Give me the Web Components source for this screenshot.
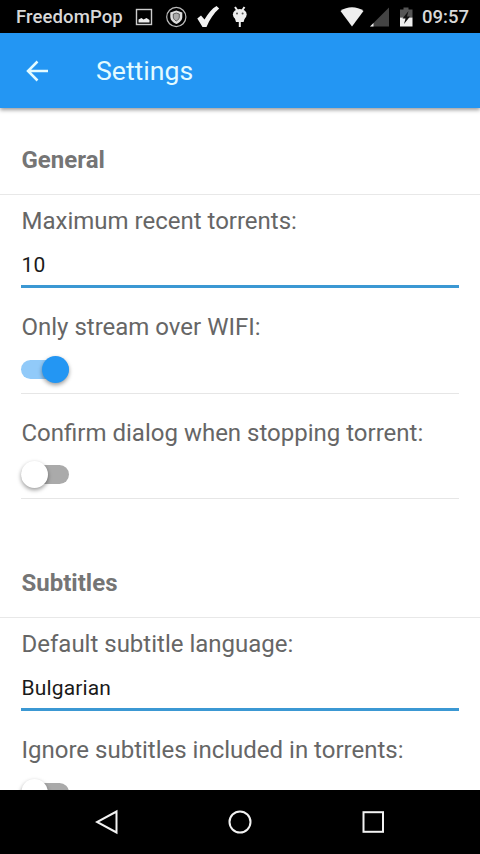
<!DOCTYPE html>
<html lang="en">
<head>
<meta charset="utf-8">
<title>Settings</title>
<style>
html,body{margin:0;height:100%;overflow:hidden;background:#fff;font-family:Roboto,"Noto Sans",sans-serif}
</style>
</head>
<body>
<settings-screen></settings-screen>
<script>
const define = (name, html) => {
  const t = document.createElement('template');
  t.innerHTML = html;
  customElements.define(name, class extends HTMLElement {
    constructor() {
      super();
      this.attachShadow({mode: 'open'}).appendChild(t.content.cloneNode(true));
    }
  });
};

define('status-bar', `
<style>
:host{display:flex;align-items:center;height:33px;box-sizing:border-box;background:#000;color:#d8d8d8;font-size:18.5px;font-weight:500;line-height:33px;padding:0 11px 0 16px;flex:none}
svg{display:block;flex:none}
.name{width:108px;white-space:nowrap;margin-right:11px;padding-top:2px;letter-spacing:.1px}
.grow{flex:1}
.time{padding-top:2px;font-size:18.500px;width:47px;white-space:nowrap}
</style>
<span class="name">FreedomPop</span>
<svg width="120" height="33" viewBox="135 0 120 33">
  <rect x="136.5" y="9.5" width="15" height="15" fill="none" stroke="#ccc" stroke-width="1.4"/>
  <path d="M138.5 22.5v-3l3-1.5 2 1.5 3-1.5 3 2v2.500z" fill="#eee"/>
  <circle cx="176.300" cy="17" r="9.600" fill="none" stroke="#bbb" stroke-width="1.200"/>
  <path d="M176.300 10.500l6 2v4.500c0 3-2.500 5.500-6 7-3.500-1.500-6-4-6-7v-4.500z" fill="#ddd"/>
  <path d="M176.300 13l3 1v3c0 1.500-1 3-3 4-2-1-3-2.500-3-4v-3z" fill="#aaa" stroke="#444" stroke-width=".8"/>
  <path d="M197.300 18.500l3.700-3 3.500 4c3.500-6 7.500-11 12-13.500l2.700 2.500c-5.500 4.500-9.500 11-12.700 18.500h-4z" fill="#f2f2f2"/>
  <path d="M235 7l2.200 3.200M244.500 7l-2.200 3.200M239.800 20v7" stroke="#eee" stroke-width="2"/>
  <ellipse cx="239.800" cy="14.500" rx="6.900" ry="5.500" fill="#eee"/>
  <path d="M234.500 17h10.600l-1.500 5h-7.600z" fill="#eee"/>
  <circle cx="237" cy="13.500" r="1" fill="#555"/><circle cx="242.600" cy="13.500" r="1" fill="#555"/>
</svg>
<span class="grow"></span>
<svg width="82" height="33" viewBox="340 0 82 33">
  <path d="M340.500 11c6.500-5 16.500-5 23 0l-11.500 15.500z" fill="#eee"/>
  <path d="M389 7.500v19h-19z" fill="#444"/><path d="M373.500 23v3.500h-3.500z" fill="#eee"/>
  <path d="M400 9.500h3.500v-2h5v2h4v8h-12.500z" fill="#555"/>
  <path d="M400 17.500h12.500v9h-12.500z" fill="#eee"/>
  <path d="M408.500 11l-6 7.500h3l-1.500 5.500 6-7.500h-3z" fill="#111"/>
</svg>
<span class="time">09:57</span>`);

define('app-bar', `
<style>
:host{display:flex;align-items:center;height:75px;flex:none;background:#2396f3;color:#e3fbff;box-shadow:0 2px 4px rgba(0,0,0,.4);position:relative;z-index:1;padding-left:26px;font-size:26.600px}
svg{display:block;margin-right:48px}
</style>
<svg width="22" height="22" viewBox="0 0 22 22"><path d="M22 11H2.500M11.500 1.500L2 11l9.500 9.500" fill="none" stroke="#e3fbff" stroke-width="2.500"/></svg>
<span><slot></slot></span>`);

define('section-title', `
<style>
:host{display:flex;flex-direction:column;justify-content:flex-end;height:var(--h,87px);box-sizing:border-box;border-bottom:1px solid #e8e8e8;padding:0 21.500px 20px;font-size:24px;font-weight:700;line-height:28px;color:#757575}
</style>
<span><slot></slot></span>`);

define('text-setting', `
<style>
:host{display:flex;flex-direction:column;box-sizing:border-box;height:93px;margin:0 21px;border-bottom:3px solid #3b98d3;padding-top:12px;color:#1a1a1a}
.label{font-size:24px;line-height:28px;color:#666;white-space:nowrap;padding-left:.5px}
.value{font-size:21px;line-height:26px;margin-top:17px;letter-spacing:.15px;padding-left:.5px}
</style>
<span class="label"><slot name="label"></slot></span>
<span class="value"><slot></slot></span>`);

define('toggle-switch', `
<style>
:host{display:block;width:49px;height:28px}
.track{display:flex;align-items:center;height:19px;margin-top:4.500px;width:48px;border-radius:10px;background:#aaa}
.knob{width:27px;height:27px;flex:none;border-radius:50%;background:#fff;box-shadow:0 2px 4px rgba(0,0,0,.4)}
:host([on]) .track{background:#91caf9;justify-content:flex-end}
:host([on]) .knob{background:#2396f3}
</style>
<div class="track"><div class="knob"></div></div>`);

define('switch-setting', `
<style>
:host{display:flex;flex-direction:column;box-sizing:border-box;height:105.500px;margin:0 21px;border-bottom:1px solid #e6e6e6;padding-top:25px}
.label{font-size:24px;line-height:28px;color:#666;white-space:nowrap;padding-left:.5px}
.control{margin-top:14.400px}
</style>
<span class="label"><slot></slot></span>
<div class="control"><slot name="control"></slot></div>`);

define('nav-bar', `
<style>
:host{display:flex;height:64px;flex:none;background:#000;position:relative;z-index:1;justify-content:space-between;align-items:center;padding:0 95px}
svg{display:block}
</style>
<svg width="24" height="26" viewBox="0 0 24 26"><path d="M21.500 2.500v21L2 13z" fill="none" stroke="#f2f2f2" stroke-width="2"/></svg>
<svg width="26" height="26" viewBox="0 0 26 26"><circle cx="13" cy="13" r="10.500" fill="none" stroke="#f2f2f2" stroke-width="2"/></svg>
<svg width="24" height="26" viewBox="0 0 24 26"><rect x="2.500" y="3.200" width="19.500" height="19.600" fill="none" stroke="#f2f2f2" stroke-width="2"/></svg>`);

define('settings-screen', `
<style>
:host{display:flex;flex-direction:column;width:480px;height:854px;overflow:hidden;background:#fff}
main{flex:1;min-height:0;overflow:hidden}
.second{--h:119px}
</style>
<status-bar></status-bar>
<app-bar>Settings</app-bar>
<main>
  <section-title>General</section-title>
  <text-setting><span slot="label">Maximum recent torrents:</span>10</text-setting>
  <switch-setting>Only stream over WIFI:<toggle-switch slot="control" on></toggle-switch></switch-setting>
  <switch-setting>Confirm dialog when stopping torrent:<toggle-switch slot="control"></toggle-switch></switch-setting>
  <section-title class="second">Subtitles</section-title>
  <text-setting><span slot="label">Default subtitle language:</span>Bulgarian</text-setting>
  <switch-setting>Ignore subtitles included in torrents:<toggle-switch slot="control"></toggle-switch></switch-setting>
</main>
<nav-bar></nav-bar>`);
</script>
</body>
</html>
